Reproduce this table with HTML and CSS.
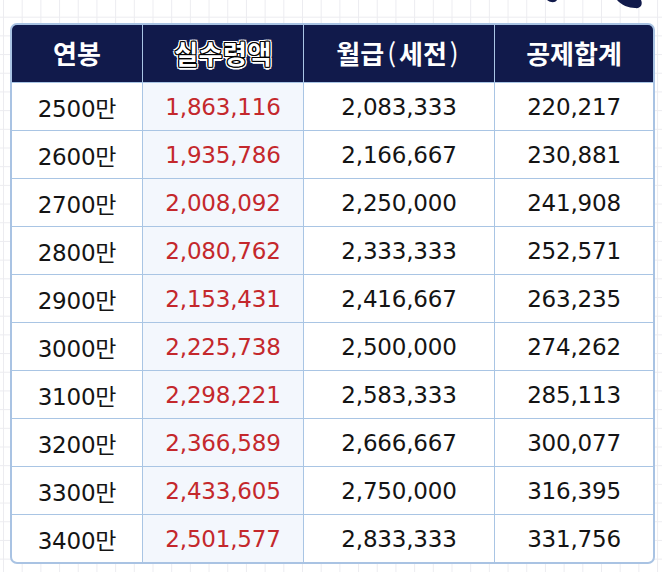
FILE: index.html
```
<!DOCTYPE html>
<html lang="ko">
<head>
<meta charset="utf-8">
<link rel="stylesheet" href="styles.css">
</head>
<body>
<div class="page">
  <svg class="blob" width="110" height="14" viewBox="0 0 110 14">
    <path d="M2 0 L12 0 C10 3 6 3 2 0 Z" fill="#111a4b"/>
    <path d="M72 0 L96 0 C98 4 96 9 90 8 C84 8 76 5 72 0 Z" fill="#111a4b"/>
  </svg>
  <div class="table">
    <div class="cell head">연봉</div>
    <div class="cell head outline"><span>실수령액</span></div>
    <div class="cell head">월급<span class="paren">(</span>세전<span class="paren">)</span></div>
    <div class="cell head">공제합계</div>

    <div class="cell">2500만</div><div class="cell net">1,863,116</div><div class="cell">2,083,333</div><div class="cell">220,217</div>
    <div class="cell">2600만</div><div class="cell net">1,935,786</div><div class="cell">2,166,667</div><div class="cell">230,881</div>
    <div class="cell">2700만</div><div class="cell net">2,008,092</div><div class="cell">2,250,000</div><div class="cell">241,908</div>
    <div class="cell">2800만</div><div class="cell net">2,080,762</div><div class="cell">2,333,333</div><div class="cell">252,571</div>
    <div class="cell">2900만</div><div class="cell net">2,153,431</div><div class="cell">2,416,667</div><div class="cell">263,235</div>
    <div class="cell">3000만</div><div class="cell net">2,225,738</div><div class="cell">2,500,000</div><div class="cell">274,262</div>
    <div class="cell">3100만</div><div class="cell net">2,298,221</div><div class="cell">2,583,333</div><div class="cell">285,113</div>
    <div class="cell">3200만</div><div class="cell net">2,366,589</div><div class="cell">2,666,667</div><div class="cell">300,077</div>
    <div class="cell">3300만</div><div class="cell net">2,433,605</div><div class="cell">2,750,000</div><div class="cell">316,395</div>
    <div class="cell">3400만</div><div class="cell net">2,501,577</div><div class="cell">2,833,333</div><div class="cell">331,756</div>
  </div>
</div>
</body>
</html>
```
FILE: styles.css
```
html, body {
  margin: 0;
  padding: 0;
}
body {
  width: 662px;
  height: 572px;
  overflow: hidden;
  background-color: #ffffff;
  background-image:
    linear-gradient(to right, #ececf0 1px, transparent 1px),
    linear-gradient(to bottom, #ececf0 1px, transparent 1px);
  background-size: 18.7px 18.7px;
  background-position: 3px -2px;
}
.page {
  position: relative;
  padding: 23px 0 0 10px;
}
.blob {
  position: absolute;
  top: 0;
  left: 545px;
}
.table {
  width: 641px;
  border: 2px solid #a9c3e3;
  border-radius: 7px;
  overflow: hidden;
  display: grid;
  grid-template-columns: 130px 160px 190px 158px;
  grid-auto-rows: 47px;
  grid-template-rows: 57px;
  column-gap: 1px;
  row-gap: 1px;
  background: #a9c5e4;
  font-family: "DejaVu Sans", "Noto Sans CJK KR", sans-serif;
}
.cell {
  background: #ffffff;
  display: flex;
  align-items: center;
  justify-content: center;
  font-size: 23px;
  color: #141414;
  letter-spacing: -0.2px;
}
.cell.net {
  background: #f3f7fd;
  color: #c4282c;
}
.cell.head {
  background: #111a4b;
  color: #ffffff;
  font-family: "Noto Sans CJK KR", sans-serif;
  font-weight: 700;
  font-size: 26px;
  letter-spacing: 0;
  padding-bottom: 3px;
}
.paren {
  font-weight: 400;
  margin: 0 3px;
}
.cell.head.outline span {
  letter-spacing: 0.5px;
  text-shadow:
    -1px 0 0 #000, 1px 0 0 #000, 0 -1px 0 #000, 0 1px 0 #000,
    -1px -1px 0 #000, 1px -1px 0 #000, -1px 1px 0 #000, 1px 1px 0 #000,
    -2.5px 0 0 #fff, 2.5px 0 0 #fff, 0 -2.5px 0 #fff, 0 2.5px 0 #fff,
    -2px -2px 0 #fff, 2px -2px 0 #fff, -2px 2px 0 #fff, 2px 2px 0 #fff;
}
```
